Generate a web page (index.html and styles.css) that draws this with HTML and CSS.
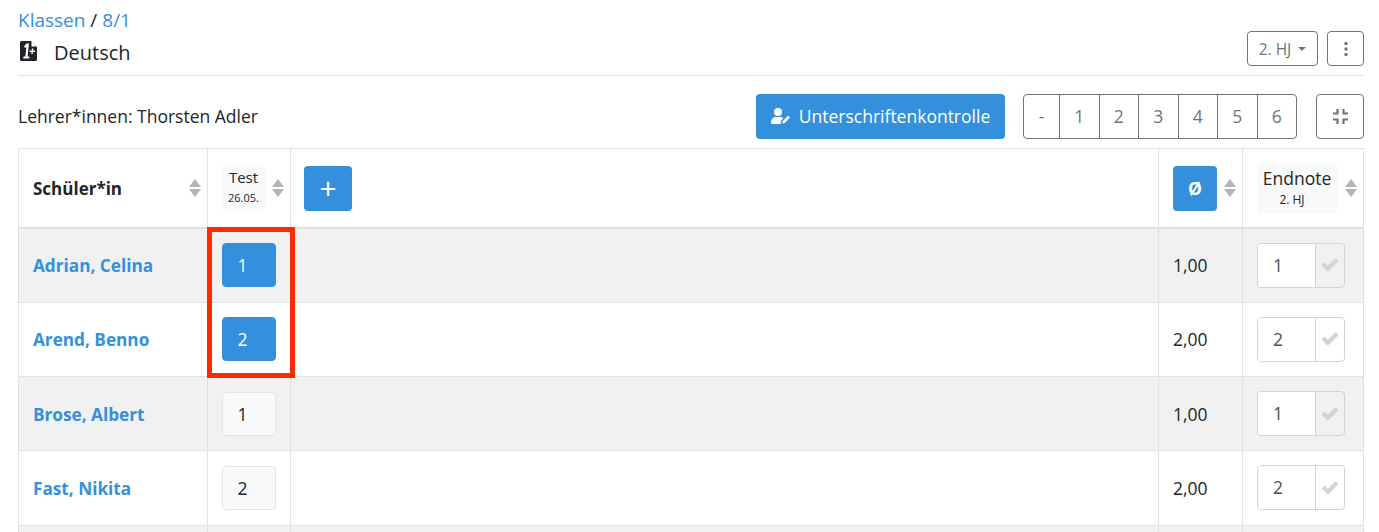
FILE: index.html
```html
<!DOCTYPE html>
<html lang="de">

<head>
    <meta charset="UTF-8">
    <title>Deutsch - 8/1</title>
    <link rel="stylesheet" href="styles.css">
</head>

<body>
    <div class="page">
        <header class="head">
            <div>
                <div class="crumbs"><a href="#">Klassen</a> / <a href="#">8/1</a></div>
                <h1 class="title">
                    <svg class="file-icon" viewBox="0 0 17 20" width="17" height="20">
                        <path fill="#212529" d="M1.5 0H11L17 6V18.5A1.5 1.5 0 0 1 15.5 20H1.5A1.5 1.5 0 0 1 0 18.5V1.5A1.5 1.5 0 0 1 1.5 0Z" />
                        <path fill="#fff" d="M11.5 0.5V5.5H16.5Z" />
                        <path fill="#fff" d="M6.6 2.5H9L7.6 15.6H9.4L9.1 17.6H3.2L3.5 15.6H5.3L6.3 6.6H4.2L4.5 4.8Z" />
                        <path fill="none" stroke="#fff" stroke-width="1.4" d="M12.6 7.5L12 13M9.6 10.3H15" />
                    </svg>
                    Deutsch
                </h1>
            </div>
            <div class="head-actions">
                <button class="btn-outline hj">2. HJ <span class="caret"></span></button>
                <button class="btn-outline square">
                    <svg viewBox="0 0 4 16" width="4" height="16">
                        <circle cx="2" cy="2.5" r="1.7" fill="#6c757d" />
                        <circle cx="2" cy="8" r="1.7" fill="#6c757d" />
                        <circle cx="2" cy="13.5" r="1.7" fill="#6c757d" />
                    </svg>
                </button>
            </div>
        </header>

        <div class="toolbar">
            <div class="teacher">Lehrer*innen: Thorsten Adler</div>
            <button class="btn-primary sign">
                <svg viewBox="0 0 20 16" width="20" height="16">
                    <circle cx="7" cy="4" r="4" fill="#fff" />
                    <path fill="#fff" d="M0 14.5C0 11 2.5 9 5 9H9C10.5 9 11.5 9.5 12.3 10.3L10.2 12.6L9.6 16H1.5A1.5 1.5 0 0 1 0 14.5Z" />
                    <path fill="#fff" d="M11.2 15.6L11.8 13L17 7.8L19 9.6L13.8 15Z" />
                </svg>
                Unterschriftenkontrolle
            </button>
            <div class="btn-group">
                <button>-</button>
                <button>1</button>
                <button>2</button>
                <button>3</button>
                <button>4</button>
                <button>5</button>
                <button>6</button>
            </div>
            <button class="btn-outline square compress">
                <svg viewBox="0 0 17 17" width="17" height="17">
                    <path fill="none" stroke="#6c757d" stroke-width="2.2" d="M5.5 1V5.5H1M11.5 1V5.5H16M5.5 16V11.5H1M11.5 16V11.5H16" />
                </svg>
            </button>
        </div>

        <div class="table-wrap">
            <table class="grades">
                <colgroup>
                    <col class="col-name">
                    <col class="col-test">
                    <col>
                    <col class="col-avg">
                    <col class="col-final">
                </colgroup>
                <thead>
                    <tr>
                        <th class="th-name"><div class="th-in">Schüler*in<span class="sort"></span></div></th>
                        <th><div class="th-in"><span class="test-tag">Test<small>26.05.</small></span><span class="sort"></span></div></th>
                        <th><button class="btn-primary add">+</button></th>
                        <th><div class="th-in"><button class="btn-primary avg">Ø</button><span class="sort"></span></div></th>
                        <th><div class="th-in"><span class="final-tag">Endnote<small>2. HJ</small></span><span class="sort"></span></div></th>
                    </tr>
                </thead>
                <tbody>
                    <tr class="odd">
                        <td><a href="#">Adrian, Celina</a></td>
                        <td><span class="grade on">1</span></td>
                        <td></td>
                        <td>1,00</td>
                        <td><span class="final"><span class="val">1</span><span class="ok"><svg viewBox="0 0 18 14" width="18" height="14"><path fill="#ced4da" d="M0.5 7.5L3.5 4.5L6.8 7.8L14.5 0.2L17.5 3.2L6.8 13.8Z" /></svg></span></span></td>
                    </tr>
                    <tr>
                        <td><a href="#">Arend, Benno</a></td>
                        <td><span class="grade on">2</span></td>
                        <td></td>
                        <td>2,00</td>
                        <td><span class="final"><span class="val">2</span><span class="ok"><svg viewBox="0 0 18 14" width="18" height="14"><path fill="#ced4da" d="M0.5 7.5L3.5 4.5L6.8 7.8L14.5 0.2L17.5 3.2L6.8 13.8Z" /></svg></span></span></td>
                    </tr>
                    <tr class="odd">
                        <td><a href="#">Brose, Albert</a></td>
                        <td><span class="grade">1</span></td>
                        <td></td>
                        <td>1,00</td>
                        <td><span class="final"><span class="val">1</span><span class="ok"><svg viewBox="0 0 18 14" width="18" height="14"><path fill="#ced4da" d="M0.5 7.5L3.5 4.5L6.8 7.8L14.5 0.2L17.5 3.2L6.8 13.8Z" /></svg></span></span></td>
                    </tr>
                    <tr>
                        <td><a href="#">Fast, Nikita</a></td>
                        <td><span class="grade">2</span></td>
                        <td></td>
                        <td>2,00</td>
                        <td><span class="final"><span class="val">2</span><span class="ok"><svg viewBox="0 0 18 14" width="18" height="14"><path fill="#ced4da" d="M0.5 7.5L3.5 4.5L6.8 7.8L14.5 0.2L17.5 3.2L6.8 13.8Z" /></svg></span></span></td>
                    </tr>
                    <tr class="odd">
                        <td></td>
                        <td></td>
                        <td></td>
                        <td></td>
                        <td></td>
                    </tr>
                </tbody>
            </table>
            <div class="highlight"></div>
        </div>
    </div>
</body>

</html>
```

FILE: styles.css
```css
html, body {
    height: 100%;
    overflow: hidden;
}

body {
    margin: 0;
    font-family: 'Open Sans', sans-serif;
    font-size: 17.5px;
    color: #212529;
    background: #fff;
}

a {
    color: #3490dc;
    text-decoration: none;
}

button {
    font-family: inherit;
    cursor: pointer;
}

.page {
    padding: 9px 15px 0 18px;
}

.head {
    display: flex;
    justify-content: space-between;
    align-items: flex-end;
    border-bottom: 1px solid #dee2e6;
    height: 67px;
    padding-bottom: 7px;
    box-sizing: border-box;
}

.crumbs {
    font-size: 19px;
    line-height: 25px;
}

.title {
    display: flex;
    align-items: center;
    margin: 5px 0 0;
    font-size: 20px;
    font-weight: 400;
    line-height: 30px;
}

.file-icon {
    margin: -5px 17px 0 2px;
}

.head-actions {
    display: flex;
    gap: 9px;
    margin-bottom: 2px;
}

.btn-outline {
    height: 35px;
    padding: 0;
    border: 1px solid #6c757d;
    border-radius: 4px;
    background: #fff;
    color: #6c757d;
    font-size: 15.5px;
    display: flex;
    align-items: center;
    justify-content: center;
}

.hj {
    width: 71px;
    gap: 7px;
}

.caret {
    border-top: 4px solid #6c757d;
    border-left: 4px solid transparent;
    border-right: 4px solid transparent;
}

.square {
    width: 37px;
}

.toolbar {
    display: flex;
    align-items: center;
    height: 72px;
    padding-top: 8px;
    box-sizing: border-box;
}

.teacher {
    flex: 1;
}

.btn-primary {
    border: none;
    border-radius: 4px;
    background: #3490dc;
    color: #fff;
    font-weight: 400;
}

.sign {
    width: 249px;
    height: 45px;
    font-size: 17.5px;
    display: flex;
    align-items: center;
    justify-content: center;
    gap: 8px;
    margin-right: 18px;
}

.btn-group {
    display: flex;
    height: 45px;
    margin-right: 19px;
    border: 1px solid #6c757d;
    border-radius: 4px;
    box-sizing: border-box;
}

.btn-group button {
    width: 39.5px;
    padding: 0;
    border: none;
    border-left: 1px solid #6c757d;
    background: none;
    color: #6c757d;
    font-size: 17.5px;
}

.btn-group button:first-child {
    width: 35px;
    border-left: none;
}

.compress {
    width: 48px;
    height: 45px;
}

.table-wrap {
    position: relative;
}

.grades {
    width: 100%;
    table-layout: fixed;
    border-collapse: collapse;
}

.col-name { width: 189px; }
.col-test { width: 83px; }
.col-avg { width: 84px; }
.col-final { width: 121px; }

.grades th, .grades td {
    border: 1px solid #dee2e6;
    padding: 0 6px 0 14px;
    text-align: left;
    vertical-align: middle;
}

.grades th {
    height: 78px;
    border-bottom: 2px solid #dee2e6;
    font-weight: 400;
}

.grades td {
    height: 74.25px;
    box-sizing: border-box;
}

.grades .th-name {
    font-weight: 700;
    font-size: 17px;
}

.grades tr.odd td {
    background: #f1f1f2;
}

.grades td a {
    font-weight: 700;
    font-size: 17.2px;
}

.th-in {
    display: flex;
    align-items: center;
    justify-content: space-between;
}

.sort {
    display: inline-block;
    position: relative;
    width: 12px;
    height: 18px;
}

.sort::before, .sort::after {
    content: "";
    position: absolute;
    left: 0;
    border-left: 6px solid transparent;
    border-right: 6px solid transparent;
}

.sort::before {
    top: 0;
    border-bottom: 8px solid #b5b5b5;
}

.sort::after {
    bottom: 0;
    border-top: 8px solid #b5b5b5;
}

.test-tag, .final-tag {
    display: flex;
    flex-direction: column;
    align-items: center;
    background: #f8f9fa;
    border-radius: 4px;
    line-height: 22px;
    font-size: 15px;
}

.test-tag {
    width: 43px;
    height: 46px;
    padding-top: 1px;
    box-sizing: border-box;
}

.final-tag {
    width: 80px;
    height: 51px;
    padding-top: 4px;
    box-sizing: border-box;
    font-size: 17.5px;
}

.test-tag small {
    margin-top: 2px;
    font-size: 11px;
    line-height: 16px;
}

.final-tag small {
    margin: 3px 10px 0 0;
    font-size: 12px;
    line-height: 16px;
}

.add {
    display: block;
    width: 48px;
    height: 45px;
    margin-left: -1px;
    padding: 0;
    font-size: 30px;
    line-height: 1;
}

.avg {
    width: 44px;
    height: 45px;
    padding: 0;
    font-size: 17.5px;
    font-weight: 700;
}

.grade {
    display: block;
    width: 54px;
    height: 44px;
    box-sizing: border-box;
    padding-right: 13px;
    border: 1px solid #e3e6e9;
    border-radius: 4px;
    background: #f8f9fa;
    line-height: 42px;
    text-align: center;
}

.grade.on {
    background: #3490dc;
    border-color: #3490dc;
    color: #fff;
}

.final {
    display: flex;
    width: 88px;
    height: 45px;
    box-sizing: border-box;
    border: 1px solid #ced4da;
    border-radius: 4px;
    overflow: hidden;
}

.val {
    width: 57px;
    background: #fff;
    color: #495057;
    line-height: 43px;
    padding-left: 15px;
    box-sizing: border-box;
}

.ok {
    flex: 1;
    display: flex;
    align-items: center;
    justify-content: center;
    border-left: 1px solid #ced4da;
}

/* Markierung ueber den Noten */
.highlight {
    position: absolute;
    left: 189px;
    top: 79px;
    width: 88px;
    height: 151px;
    box-sizing: border-box;
    border: 5px solid #ff2a00;
}
```
